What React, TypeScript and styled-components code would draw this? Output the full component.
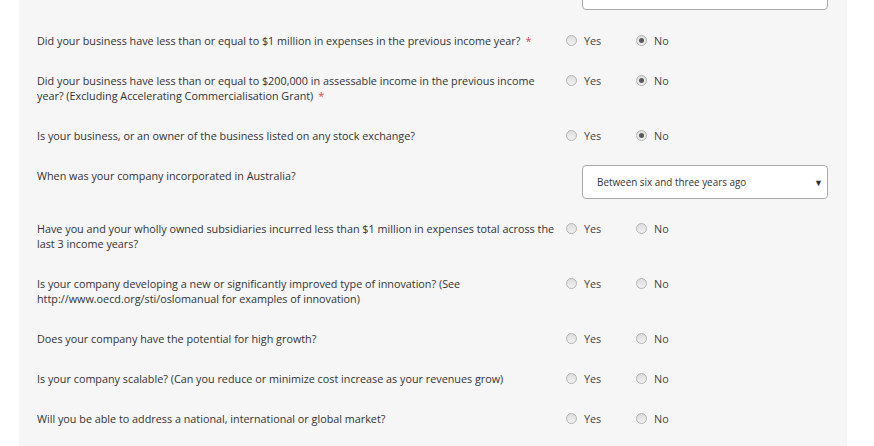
import React from "react";
import styled, { createGlobalStyle } from "styled-components";

const Global = createGlobalStyle`
  html, body { margin: 0; padding: 0; background: #ffffff; }
  body { font-family: "Open Sans", "Liberation Sans", sans-serif; overflow: hidden; }
`;

const Page = styled.div`
  width: 874px;
  height: 446px;
  overflow: hidden;
  background: #ffffff;
`;

const Panel = styled.div`
  margin: -24px 0 0 19px;
  width: 828px;
  min-height: 500px;
  background: #f6f6f6;
  padding: 0 0 0 18px;
  box-sizing: border-box;
  display: flex;
  flex-direction: column;
  gap: 25px;
`;

const Row = styled.div`
  display: grid;
  grid-template-columns: 529px 1fr;
  align-items: start;
`;

const Question = styled.div`
  font-size: 10.8px;
  line-height: 15px;
  color: #333333;
  padding-right: 8px;
`;

const Required = styled.span`
  color: #e0474c;
  margin-left: 5px;
`;

const Options = styled.div`
  display: flex;
  align-items: center;
  height: 15px;
`;

const Option = styled.label`
  display: flex;
  align-items: center;
  width: 70px;
  font-size: 10.8px;
  color: #444444;
  gap: 7px;
`;

const Radio = styled.span<{ $checked?: boolean }>`
  width: 9px;
  height: 9px;
  border-radius: 50%;
  border: 1px solid #b3b3b3;
  background: linear-gradient(#dedede, #f1f1f1);
  display: flex;
  align-items: center;
  justify-content: center;
  box-sizing: content-box;
  &::after {
    content: "";
    display: ${(p) => (p.$checked ? "block" : "none")};
    width: 5px;
    height: 5px;
    border-radius: 50%;
    background: #5a5a5a;
  }
`;

const Field = styled.div<{ $inline?: boolean }>`
  margin: ${(p) => (p.$inline ? "-3px 0 -3px 16px" : "0 0 -2px 16px")};
  width: 246px;
  height: 34px;
  box-sizing: border-box;
  border: 1px solid #a9a9a9;
  border-radius: 4px;
  background: #ffffff;
  display: flex;
  align-items: center;
  padding: 0 4px 0 14px;
  font-size: 9.9px;
  color: #333333;
`;

const FieldText = styled.span`
  flex: 1;
`;

const Caret = styled.span`
  font-size: 9px;
  color: #333333;
`;

type Q = {
  text: string;
  required?: boolean;
  answer?: "yes" | "no";
  select?: string;
};

const questions: Q[] = [
  {
    text: "Did your business have less than or equal to $1 million in expenses in the previous income year?",
    required: true,
    answer: "no",
  },
  {
    text: "Did your business have less than or equal to $200,000 in assessable income in the previous income year? (Excluding Accelerating Commercialisation Grant)",
    required: true,
    answer: "no",
  },
  { text: "Is your business, or an owner of the business listed on any stock exchange?", answer: "no" },
  { text: "When was your company incorporated in Australia?", select: "Between six and three years ago" },
  {
    text: "Have you and your wholly owned subsidiaries incurred less than $1 million in expenses total across the last 3 income years?",
  },
  {
    text: "Is your company developing a new or significantly improved type of innovation? (See http://www.oecd.org/sti/oslomanual for examples of innovation)",
  },
  { text: "Does your company have the potential for high growth?" },
  { text: "Is your company scalable? (Can you reduce or minimize cost increase as your revenues grow)" },
  { text: "Will you be able to address a national, international or global market?" },
];

function YesNo({ answer }: { answer?: "yes" | "no" }) {
  return (
    <Options>
      <Option>
        <Radio $checked={answer === "yes"} />
        Yes
      </Option>
      <Option>
        <Radio $checked={answer === "no"} />
        No
      </Option>
    </Options>
  );
}

export default function App() {
  return (
    <Page>
      <Global />
      <Panel>
        <Row>
          <Question />
          <Field />
        </Row>
        {questions.map((q, i) => (
          <Row key={i}>
            <Question>
              {q.text}
              {q.required && <Required>*</Required>}
            </Question>
            {q.select ? (
              <Field $inline>
                <FieldText>{q.select}</FieldText>
                <Caret>▼</Caret>
              </Field>
            ) : (
              <YesNo answer={q.answer} />
            )}
          </Row>
        ))}
      </Panel>
    </Page>
  );
}
